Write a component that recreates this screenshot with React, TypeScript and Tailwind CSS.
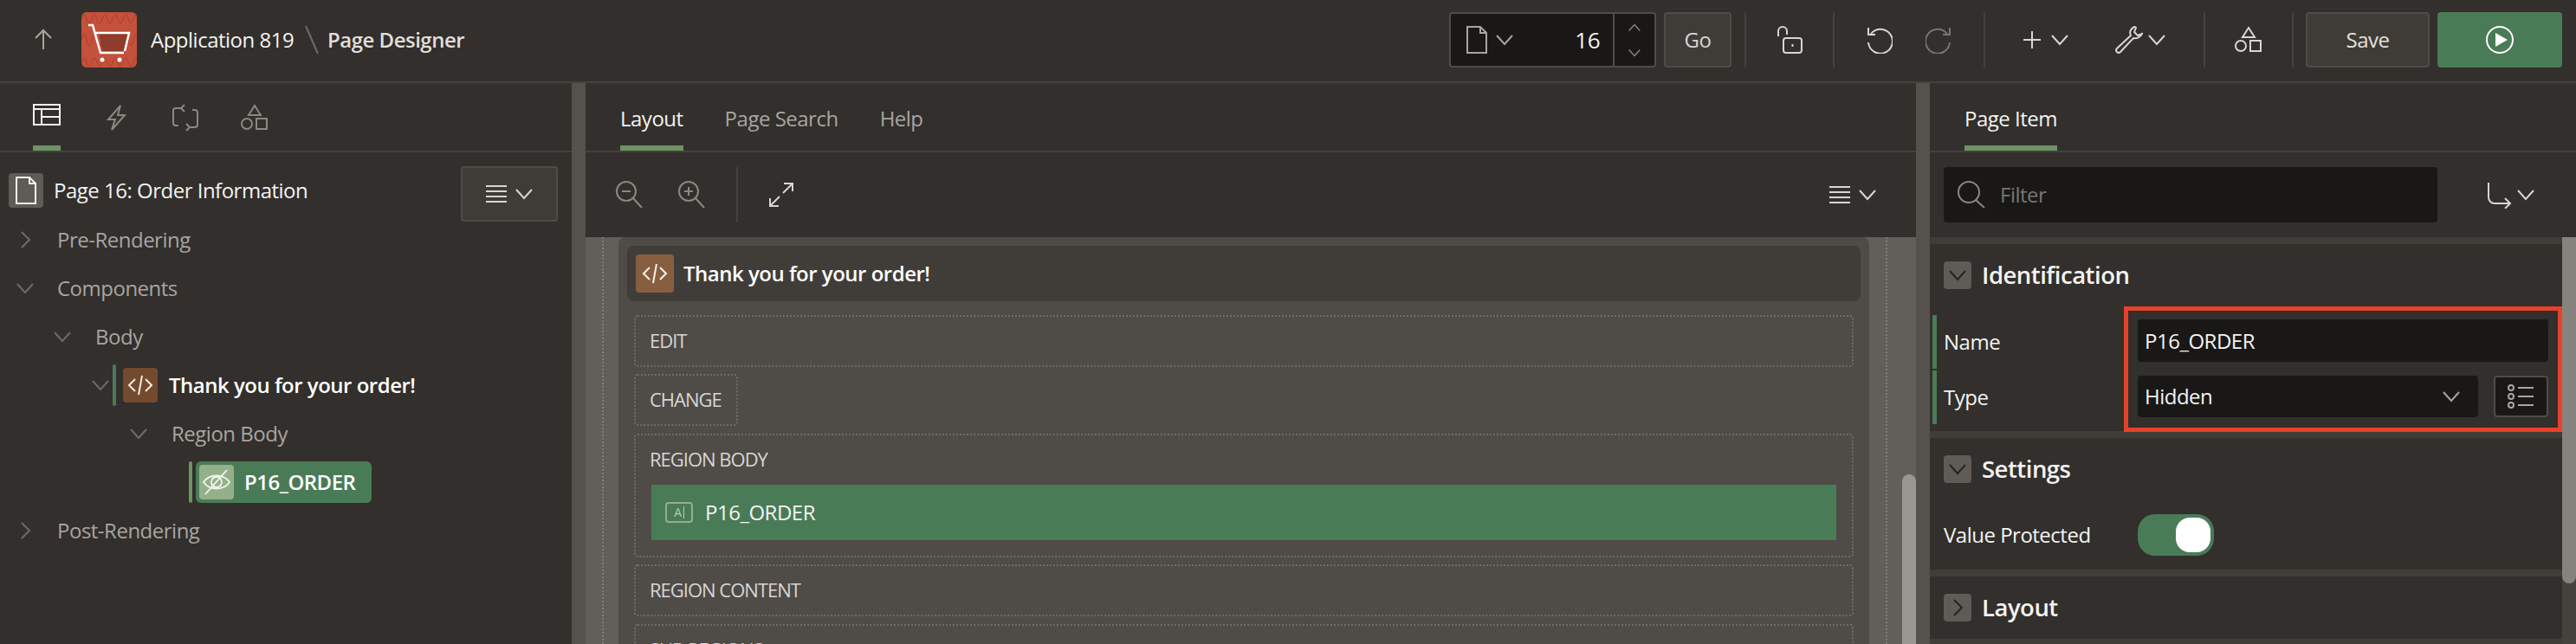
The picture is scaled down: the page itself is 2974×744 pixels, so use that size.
import type { ReactNode } from 'react'

const Chevron = ({ dir = 'down', className = 'text-[#6f6b66]', size = 'h-5 w-5' }: { dir?: 'down' | 'right' | 'up'; className?: string; size?: string }) => {
  const d = dir === 'down' ? 'M1 5l9 10 9-10' : dir === 'up' ? 'M1 15l9-10 9 10' : 'M6 1l9 9-9 9'
  return (
    <svg viewBox="0 0 20 20" className={`${size} shrink-0 ${className}`} fill="none" stroke="currentColor" strokeWidth="2">
      <path d={d} />
    </svg>
  )
}

const Ico = ({ children, size = 'h-8 w-8', className = 'text-[#d8d6d2]' }: { children: ReactNode; size?: string; className?: string }) => (
  <svg viewBox="0 0 32 32" className={`${size} shrink-0 ${className}`} fill="none" stroke="currentColor" strokeWidth="2">
    {children}
  </svg>
)

const Shapes = ({ className }: { className?: string }) => (
  <Ico className={className}>
    <path d="M16 2l7 11H9z" />
    <circle cx="7" cy="23" r="6" />
    <rect x="18" y="17" width="12" height="12" />
  </Ico>
)

const Hamburger = () => (
  <svg viewBox="0 0 24 20" className="h-5 w-6 shrink-0 text-[#d8d6d2]" fill="none" stroke="currentColor" strokeWidth="2">
    <path d="M0 1h24M0 7h24M0 13h24M0 19h24" />
  </svg>
)

const Sep = ({ className }: { className: string }) => <div className={`h-16 w-0.5 shrink-0 bg-[#45423e] ${className}`} />

const CodeBadge = ({ className }: { className: string }) => (
  <div className={`flex h-10 w-10 shrink-0 items-center justify-center rounded ${className}`}>
    <svg viewBox="0 0 32 32" className="h-8 w-8 text-[#f2ece4]" fill="none" stroke="currentColor" strokeWidth="2">
      <path d="M10 9l-7 7 7 7M22 9l7 7-7 7M18 5l-4 22" />
    </svg>
  </div>
)

function Header() {
  return (
    <header className="flex h-[96px] shrink-0 items-center border-b-2 border-[#45423e] bg-[#322f2c] pb-0.5">
      <Ico size="ml-[34px] h-8 w-8" className="text-[#a8a5a0]">
        <path d="M16 27V6M7 14l9-9 9 9" />
      </Ico>
      <div className="relative ml-[28px] flex h-16 w-16 shrink-0 items-center justify-center overflow-hidden rounded-md bg-[#c4513b]">
        <svg viewBox="0 0 64 64" className="absolute inset-0 h-16 w-16 text-[#a8432f]" fill="none" stroke="currentColor" strokeWidth="1">
          <path d="M0 8q3-10 6 0t6 0 6 0 6 0 6 0 6 0 6 0 6 0 6 0 6 0 6 0" />
          <path d="M0 32q3-14 6 0t6 0 6 0 6 0 6 0 6 0 6 0 6 0 6 0 6 0 6 0" />
          <path d="M0 58q3-10 6 0t6 0 6 0 6 0 6 0 6 0 6 0 6 0 6 0 6 0 6 0" />
        </svg>
        <svg viewBox="0 0 64 64" className="relative h-16 w-16" fill="none" stroke="#ffffff" strokeWidth="2.5">
          <path d="M20 23h35l-5 22H24z" fill="#8f3c2c" stroke="none" />
          <path d="M8 15h5l9 32h27M16 24h39l-5 21" />
          <circle cx="24" cy="55" r="2.5" fill="#ffffff" stroke="none" />
          <circle cx="44" cy="55" r="2.5" fill="#ffffff" stroke="none" />
        </svg>
      </div>
      <span className="ml-4 w-[172px] shrink-0 whitespace-nowrap text-[#f4f3f1]">Application 819</span>
      <svg viewBox="0 0 16 32" className="ml-[6px] h-8 w-4 shrink-0 text-[#6f6b66]" fill="none" stroke="currentColor" strokeWidth="2">
        <path d="M1 0l14 32" />
      </svg>
      <span className="ml-[10px] whitespace-nowrap font-semibold text-[#e0ded9]">Page Designer</span>

      <div className="ml-auto flex h-16 w-[239px] shrink-0 items-center rounded border-2 border-[#504c48] bg-[#191816]">
        <svg viewBox="0 0 24 32" className="ml-[18px] h-8 w-6 shrink-0 text-[#a8a5a0]" fill="none" stroke="currentColor" strokeWidth="2">
          <path d="M1 1h15l7 7v23H1zM16 1v7h7" />
        </svg>
        <Chevron className="ml-[10px] text-[#a8a5a0]" />
        <span className="ml-auto pr-[15px] text-[26px] text-[#f4f3f1]">16</span>
        <div className="flex h-full w-[48px] flex-col items-center justify-center gap-[15px] border-l-2 border-[#504c48]">
          <Chevron dir="up" size="h-3.5 w-3.5" className="text-[#8b8782]" />
          <Chevron size="h-3.5 w-3.5" className="text-[#8b8782]" />
        </div>
      </div>
      <div className="ml-[9px] flex h-16 w-[78px] shrink-0 items-center justify-center rounded border-2 border-[#4f4b47] bg-[#3f3c38] text-[#d8d6d2]">Go</div>
      <Sep className="ml-[15px]" />
      <Ico size="ml-[34px] h-8 w-8">
        <path d="M3 12V6a5 5 0 0 1 10 0v4" />
        <rect x="9" y="14" width="21" height="17" rx="3" />
        <path d="M19.5 21v3" />
      </Ico>
      <Sep className="ml-[34px]" />
      <Ico size="ml-[35px] h-8 w-8">
        <path d="M7 9a14 14 0 1 1-3 10M4 2v8h8" />
      </Ico>
      <Ico size="ml-[38px] h-8 w-8" className="text-[#7a7671]">
        <path d="M25 9a14 14 0 1 0 3 10M28 2v8h-8" />
      </Ico>
      <Sep className="ml-[35px]" />
      <Ico size="ml-[38px] h-8 w-8">
        <path d="M16 6v20M6 16h20" />
      </Ico>
      <Chevron className="ml-[6px] text-[#d8d6d2]" />
      <Ico size="ml-[54px] h-8 w-8">
        <path d="M22 1c-4 2-6 6-4 10L2 26c-2 2-1 3 0 4s2 2 4 0l15-16c4 1 8-1 10-5l-5 2-4-4 2-5c-1-1-1-1-2-1z" />
      </Ico>
      <Chevron className="ml-[6px] text-[#d8d6d2]" />
      <Sep className="ml-[44px]" />
      <Shapes className="ml-[34px] text-[#d8d6d2]" />
      <Sep className="ml-[34px]" />
      <div className="ml-[14px] flex h-16 w-[143px] shrink-0 items-center justify-center rounded border-2 border-[#4f4b47] bg-[#3f3c38] text-[#e4e2de]">Save</div>
      <div className="ml-[9px] mr-4 flex h-16 w-[144px] shrink-0 items-center justify-center rounded bg-[#4a7b57]">
        <svg viewBox="0 0 32 32" className="h-8 w-8 text-white" fill="none" stroke="currentColor" strokeWidth="2">
          <circle cx="16" cy="16" r="15" />
          <path d="M11 8l14 8-14 8z" fill="currentColor" stroke="none" />
        </svg>
      </div>
    </header>
  )
}

function TabBar({ children }: { children: ReactNode }) {
  return <div className="flex h-[80px] shrink-0 items-stretch border-b-2 border-[#45423e]">{children}</div>
}

function Tab({ label, active, className = '' }: { label: string; active?: boolean; className?: string }) {
  return (
    <div className={`flex flex-col ${className}`}>
      <span className={`flex-1 pt-[23px] whitespace-nowrap ${active ? 'text-[#f4f3f1]' : 'text-[#a8a5a0]'}`}>{label}</span>
      {active && <div className="h-1.5 bg-[#6f9265]" />}
    </div>
  )
}

function TreeText({ children }: { children: ReactNode }) {
  return <span className="whitespace-nowrap text-[#a8a5a0]">{children}</span>
}

function LeftPanel() {
  return (
    <aside className="flex w-[660px] shrink-0 flex-col">
      <TabBar>
        <div className="ml-[38px] flex w-8 flex-col">
          <div className="flex flex-1 items-center">
            <Ico className="text-[#f4f3f1]">
              <path d="M1 5h30v23H1zM1 10h30M10 10v18M10 19h21" />
            </Ico>
          </div>
          <div className="h-1.5 bg-[#6f9265]" />
        </div>
        <Ico size="ml-[48px] mt-[24px] h-8 w-8" className="text-[#8b8782]">
          <path d="M21 2L7 18h8l-4 12 15-17h-8z" />
        </Ico>
        <Ico size="ml-[48px] mt-[24px] h-8 w-8" className="text-[#8b8782]">
          <path d="M12 5H5a3 3 0 0 0-3 3v14a3 3 0 0 0 3 3h3M20 27h7a3 3 0 0 0 3-3V10a3 3 0 0 0-3-3h-3M15 1l-4 4 4 4M17 23l4 4-4 4" />
        </Ico>
        <Shapes className="ml-[48px] mt-[24px] text-[#8b8782]" />
      </TabBar>
      <div className="flex flex-col pt-4">
        <div className="flex h-[57px] items-start">
          <div className="ml-[10px] mt-2 flex h-10 w-10 shrink-0 items-center justify-center rounded bg-[#5f5b56]">
            <svg viewBox="0 0 26 32" className="h-8 w-[26px] text-[#f4f3f1]" fill="none" stroke="currentColor" strokeWidth="2">
              <path d="M2 1h15l7 7v23H2zM17 1v7h7" />
            </svg>
          </div>
          <span className="ml-3 mt-[10px] whitespace-nowrap text-[#f4f3f1]">Page 16: Order Information</span>
          <div className="ml-auto mr-4 flex h-16 w-[112px] shrink-0 items-center justify-center gap-2.5 rounded border-2 border-[#4f4b47] bg-[#3f3c38]">
            <Hamburger />
            <Chevron className="text-[#d8d6d2]" />
          </div>
        </div>
        <div className="flex h-14 items-center pl-[19px]">
          <Chevron dir="right" />
          <div className="ml-[27px]"><TreeText>Pre-Rendering</TreeText></div>
        </div>
        <div className="flex h-14 items-center pl-[19px]">
          <Chevron />
          <div className="ml-[27px]"><TreeText>Components</TreeText></div>
        </div>
        <div className="flex h-14 items-center pl-[62px]">
          <Chevron />
          <div className="ml-[28px]"><TreeText>Body</TreeText></div>
        </div>
        <div className="flex h-14 items-center pl-[106px]">
          <Chevron />
          <div className="ml-1 h-12 w-1 rounded-sm bg-[#4a7b57]" />
          <CodeBadge className="ml-2 bg-[#744a2e]" />
          <span className="ml-[13px] whitespace-nowrap font-semibold text-white">Thank you for your order!</span>
        </div>
        <div className="flex h-14 items-center pl-[150px]">
          <Chevron />
          <div className="ml-[28px]"><TreeText>Region Body</TreeText></div>
        </div>
        <div className="flex h-14 items-center pl-[218px]">
          <div className="h-12 w-1 rounded-sm bg-[#6f9265]" />
          <div className="ml-1 flex h-12 w-[203px] items-center rounded-md bg-[#4a7b57] pl-1">
            <div className="flex h-10 w-10 shrink-0 items-center justify-center rounded bg-[#93b08b]">
              <svg viewBox="0 0 32 32" className="h-8 w-8 text-[#f2f5ef]" fill="none" stroke="currentColor" strokeWidth="1.8">
                <path d="M1 16c7-10 23-10 30 0-7 10-23 10-30 0z" />
                <circle cx="16" cy="16" r="6" />
                <path d="M3 30L28 2" />
              </svg>
            </div>
            <span className="ml-3 whitespace-nowrap font-semibold text-white">P16_ORDER</span>
          </div>
        </div>
        <div className="flex h-14 items-center pl-[19px]">
          <Chevron dir="right" />
          <div className="ml-[27px]"><TreeText>Post-Rendering</TreeText></div>
        </div>
      </div>
    </aside>
  )
}

function Gutter() {
  return <div className="w-4 shrink-0 bg-[#55514c]" />
}

function DropZone({ label, className = '', children }: { label: string; className?: string; children?: ReactNode }) {
  return (
    <div className={`shrink-0 rounded-sm border-2 border-dotted border-[#6f6b66] ${className}`}>
      <div className="flex h-[54px] items-center pl-[16px] text-[22px] tracking-[-1px] text-[#d8d6d2]">{label}</div>
      {children}
    </div>
  )
}

function CenterPanel() {
  return (
    <main className="flex w-[1536px] shrink-0 flex-col">
      <TabBar>
        <Tab label="Layout" active className="ml-10" />
        <Tab label="Page Search" className="ml-12" />
        <Tab label="Help" className="ml-12" />
      </TabBar>
      <div className="flex h-[98px] shrink-0 items-center">
        <Ico size="ml-[35px] h-8 w-8" className="text-[#8b8782]">
          <circle cx="12" cy="12" r="11" />
          <path d="M20 20l10 11M7 12h10" />
        </Ico>
        <Ico size="ml-10 h-8 w-8" className="text-[#8b8782]">
          <circle cx="12" cy="12" r="11" />
          <path d="M20 20l10 11M7 12h10M12 7v10" />
        </Ico>
        <div className="ml-[35px] h-16 w-0.5 bg-[#45423e]" />
        <Ico size="ml-[34px] h-8 w-8">
          <path d="M19 3h10v9M29 3L18 14M13 29H3v-9M3 29l11-11" />
        </Ico>
        <div className="ml-auto mr-[46px] flex items-center gap-2.5">
          <Hamburger />
          <Chevron className="text-[#d8d6d2]" />
        </div>
      </div>
      <div className="relative flex min-h-0 flex-1 bg-[#625e59]">
        <div className="ml-[19px] w-0 shrink-0 border-l-2 border-dotted border-[#807c77]" />
        <div className="ml-[17px] flex w-[1444px] shrink-0 flex-col gap-2 rounded-t-lg bg-[#4f4b47] px-[10px] pt-[10px]">
          <div className="mb-2 flex h-16 w-[1424px] shrink-0 items-center rounded-lg bg-[#403d39] pl-[10px]">
            <div className="flex h-11 w-11 shrink-0 items-center justify-center rounded-sm bg-[#875f40]">
              <svg viewBox="0 0 32 32" className="h-8 w-8 text-[#f6f0e8]" fill="none" stroke="currentColor" strokeWidth="2">
                <path d="M10 9l-7 7 7 7M22 9l7 7-7 7M18 5l-4 22" />
              </svg>
            </div>
            <span className="ml-[11px] whitespace-nowrap font-semibold text-white">Thank you for your order!</span>
          </div>
          <DropZone label="EDIT" className="ml-2 h-[60px] w-[1408px]" />
          <DropZone label="CHANGE" className="ml-2 h-[60px] w-[120px]" />
          <DropZone label="REGION BODY" className="ml-2 mt-px h-[143px] w-[1408px]">
            <div className="ml-[18px] mt-[3px] flex h-16 w-[1368px] items-center bg-[#4a7b57] pl-4">
              <div className="flex h-6 w-8 items-center justify-center gap-0.5 rounded-sm border-2 border-[#93b08b] text-[14px] leading-none text-[#b9ccb3]">
                A<span className="h-3.5 w-px bg-[#b9ccb3]" />
              </div>
              <span className="ml-[14px] whitespace-nowrap text-[#f4f3f1]">P16_ORDER</span>
            </div>
          </DropZone>
          <DropZone label="REGION CONTENT" className="ml-2 h-[60px] w-[1408px]" />
          <DropZone label="SUB REGIONS" className="ml-2 mt-px h-[60px] w-[1408px]" />
        </div>
        <div className="ml-[19px] w-0 shrink-0 border-l-2 border-dotted border-[#807c77]" />
        <div className="absolute bottom-0 right-0 top-[274px] w-4 rounded-t-lg bg-[#9a9692]" />
      </div>
    </main>
  )
}

function SectionHead({ label, open }: { label: string; open?: boolean }) {
  return (
    <div className="flex h-8 items-center pl-4">
      <div className="flex h-8 w-8 shrink-0 items-center justify-center rounded bg-[#5f5b56]">
        <Chevron dir={open ? 'down' : 'right'} className="text-[#26241f]" />
      </div>
      <span className="ml-3 text-[27.5px] font-semibold text-[#f4f3f1]">{label}</span>
    </div>
  )
}

function RightPanel() {
  return (
    <section className="flex min-w-0 flex-1 flex-col">
      <TabBar>
        <Tab label="Page Item" active className="ml-10" />
      </TabBar>
      <div className="flex h-[98px] shrink-0 items-center">
        <div className="ml-4 flex h-16 w-[570px] items-center rounded bg-[#191816] pl-4">
          <svg viewBox="0 0 32 32" className="h-8 w-8 text-[#8b8782]" fill="none" stroke="currentColor" strokeWidth="2">
            <circle cx="13" cy="13" r="12" />
            <path d="M21 22l10 9" />
          </svg>
          <span className="ml-[17px] text-[#7a7671]">Filter</span>
        </div>
        <svg viewBox="0 0 32 32" className="ml-[56px] h-8 w-8 text-[#d8d6d2]" fill="none" stroke="currentColor" strokeWidth="2">
          <path d="M3 2v17a7 7 0 0 0 7 7h18M22 20l6 6-6 6" />
        </svg>
        <Chevron className="ml-1 text-[#d8d6d2]" />
      </div>
      <div className="flex min-h-0 flex-1">
        <div className="flex min-w-0 flex-1 flex-col bg-[#403d39]">
          <div className="mt-2 h-[216px] shrink-0 bg-[#322f2c]">
            <div className="pt-5"><SectionHead label="Identification" open /></div>
            <div className="mt-5 flex h-[145px]">
              <div className="flex w-[224px] shrink-0 flex-col pl-[3px]">
                <div className="mt-[10px] flex h-[62px] items-center border-l-[5px] border-[#4a7b57] pl-2 text-[#f4f3f1]">Name</div>
                <div className="mt-0.5 flex h-[62px] items-center border-l-[5px] border-[#4a7b57] pl-2 text-[#f4f3f1]">Type</div>
              </div>
              <div className="flex w-[506px] shrink-0 flex-col border-[5px] border-[#e8412a] px-[11px] pt-[10px]">
                <div className="flex h-[49px] shrink-0 items-center rounded bg-[#191816] pl-2 text-[#f4f3f1]">P16_ORDER</div>
                <div className="mt-4 flex">
                  <div className="flex h-12 w-[393px] items-center justify-between rounded bg-[#191816] pl-2 pr-[21px] text-[#f4f3f1]">
                    Hidden
                    <Chevron className="text-[#a8a5a0]" />
                  </div>
                  <div className="ml-[18px] flex h-12 w-[63px] items-center justify-center rounded border-2 border-[#4f4b47] bg-[#191816]">
                    <svg viewBox="0 0 32 32" className="h-8 w-8 text-[#a8a5a0]" fill="none" stroke="currentColor" strokeWidth="2">
                      <circle cx="4" cy="6" r="3" />
                      <circle cx="4" cy="16" r="3" />
                      <circle cx="4" cy="26" r="3" />
                      <path d="M12 6h18M12 16h18M12 26h18" />
                    </svg>
                  </div>
                </div>
              </div>
            </div>
          </div>
          <div className="mt-2 h-[152px] shrink-0 bg-[#322f2c]">
            <div className="pt-5"><SectionHead label="Settings" open /></div>
            <div className="mt-9 flex items-center pl-4">
              <span className="w-[224px] shrink-0 whitespace-nowrap text-[#f4f3f1]">Value Protected</span>
              <div className="flex h-12 w-[88px] items-center justify-end rounded-[20px] bg-[#4a7b57] pr-1">
                <div className="h-10 w-10 rounded-2xl bg-white" />
              </div>
            </div>
          </div>
          <div className="mt-2 h-[72px] shrink-0 bg-[#322f2c] pt-5">
            <SectionHead label="Layout" />
          </div>
        </div>
        <div className="w-4 shrink-0 bg-[#45423e]">
          <div className="h-[400px] rounded-b-lg bg-[#86837f]" />
        </div>
      </div>
    </section>
  )
}

export default function App() {
  return (
    <div className="flex h-[744px] w-[2974px] flex-col overflow-hidden bg-[#322f2c] font-['Open_Sans','Liberation_Sans',sans-serif] text-[24px] tracking-[-0.5px]">
      <Header />
      <div className="flex min-h-0 flex-1">
        <LeftPanel />
        <Gutter />
        <CenterPanel />
        <Gutter />
        <RightPanel />
      </div>
    </div>
  )
}
